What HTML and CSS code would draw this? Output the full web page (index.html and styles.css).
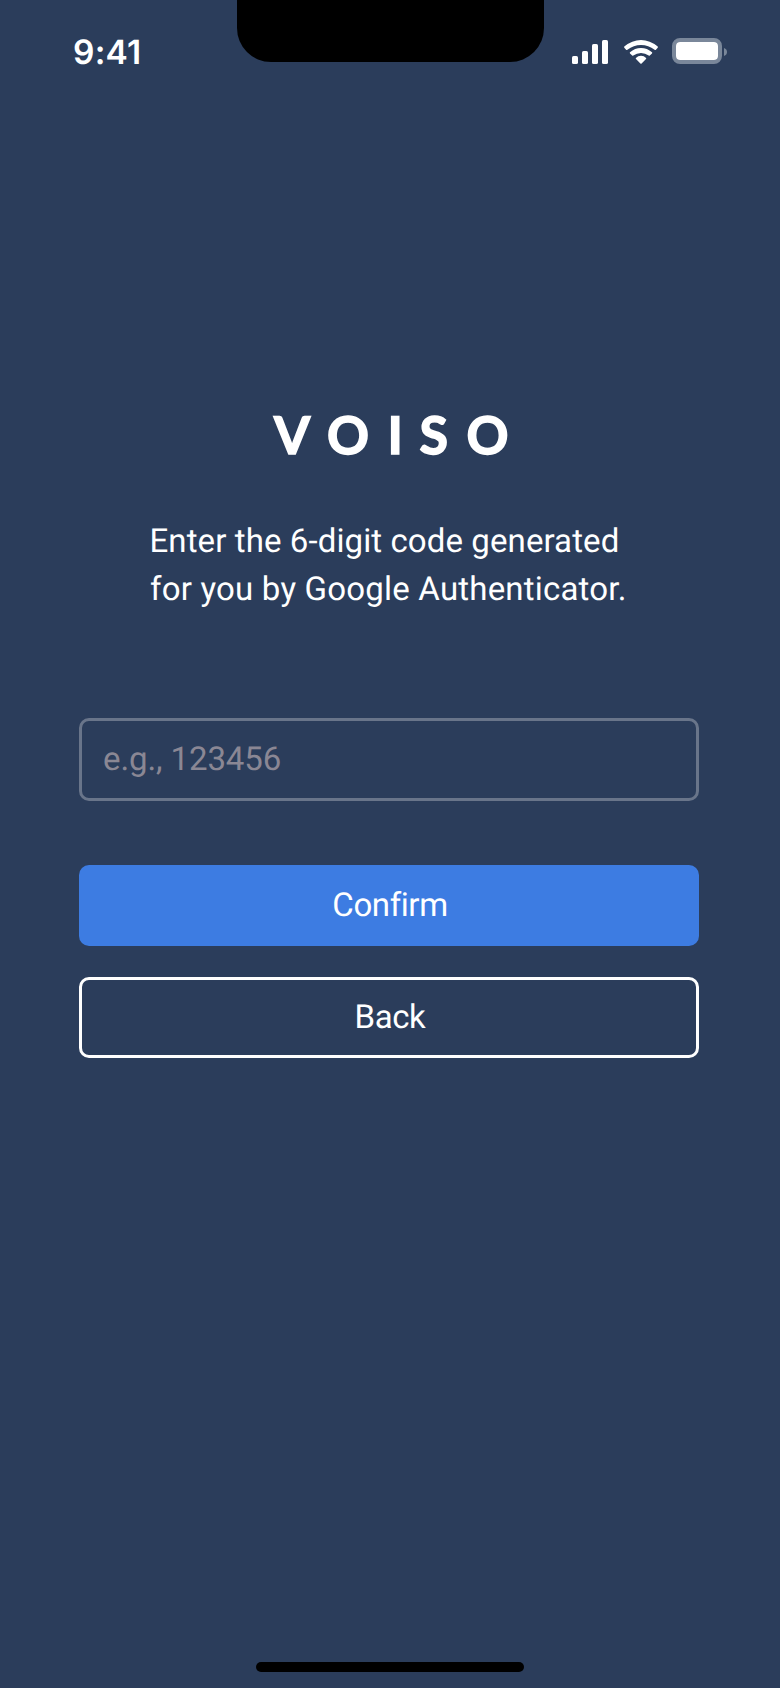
FILE: index.html
```html
<!DOCTYPE html>
<html lang="en">
<head>
<meta charset="utf-8">
<title>Voiso</title>
<link rel="stylesheet" href="styles.css">
</head>
<body>
<div class="screen">
  <header class="status">
    <span class="time">9:41</span>
    <div class="notch"></div>
    <svg class="indicators" width="156" height="28" viewBox="0 0 156 28" fill="#fff">
      <rect x="0" y="18" width="6" height="8" rx="1.6"/>
      <rect x="10" y="13" width="6" height="13" rx="1.6"/>
      <rect x="20" y="6" width="6" height="20" rx="1.6"/>
      <rect x="30" y="2" width="6" height="24" rx="1.6"/>
      <path d="M52.3 8.6Q60 2 69 2T85.700 8.600Q86.200 9.200 85.700 9.700L83.700 11.900Q83.200 12.300 82.600 11.800Q76.500 6.900 69 6.900T55.400 11.800Q54.800 12.300 54.300 11.900L52.300 9.700Q51.800 9.200 52.300 8.600Z"/>
      <path d="M58 14.300Q62.800 9.900 69 9.900T80 14.300Q80.500 14.900 80 15.400L77.800 17.600Q77.300 18.100 76.700 17.600Q73.300 14.900 69 14.900T61.300 17.600Q60.700 18.100 60.200 17.600L58 15.400Q57.500 14.900 58 14.300Z"/>
      <path d="M63.900 20Q66 17.800 69 17.800T74.100 20Q74.500 20.600 74 21.100L69.600 25.500Q69 26 68.400 25.500L64 21.100Q63.500 20.600 63.900 20Z"/>
      <rect x="102" y="2" width="46" height="22" rx="6" fill="none" stroke="#7a879a" stroke-width="4"/>
      <rect x="104" y="4" width="42" height="18" rx="4"/>
      <path d="M152 10Q155 11.200 155 14T152 18Z" fill="#7a879a"/>
    </svg>
  </header>
  <main class="content">
    <h1 class="logo"><span class="v">V</span><span class="o">O</span><span class="i">I</span><span class="s">S</span><span class="o">O</span></h1>
    <p class="intro"><span class="line first">Enter the 6-digit code generated</span><span class="line second">for you by Google Authenticator.</span></p>
    <form class="form">
      <div class="field"><span class="hint">e.g., 123456</span></div>
      <div class="button primary"><span>Confirm</span></div>
      <div class="button outline"><span>Back</span></div>
    </form>
  </main>
  <div class="home"></div>
</div>
</body>
</html>
```
FILE: styles.css
```css
* { box-sizing: border-box; }
body { margin: 0; background: #2b3d5b; }
.screen {
  width: 780px; height: 1688px; overflow: hidden;
  display: flex; flex-direction: column; align-items: center;
  background: #2b3d5b; color: #fff;
  font-family: Roboto, "Liberation Sans", sans-serif; font-size: 33px;
  text-rendering: geometricPrecision;
}
.status { width: 100%; height: 94px; display: grid; grid-template-columns: 236.500px 307px 1fr; }
.time {
  padding: 33px 0 0 73px;
  font: 600 33.500px/40px Inter, "Liberation Sans", sans-serif; letter-spacing: .2px;
}
.notch { height: 62px; background: #000; border-radius: 0 0 34px 34px; }
.indicators { margin: 38px 0 0 28.500px; }
.content { width: 620px; margin-right: 2px; padding-top: 310px; flex: 1; }
.logo {
  display: flex; margin: 0 0 0 195px; height: 62px;
  font: 700 52px/62px Lato, "Liberation Sans", sans-serif;
  -webkit-text-stroke: 1.500px #fff;
}
.logo .v { width: 53px; }
.logo .o { width: 60.500px; }
.logo .i { width: 32px; }
.logo .s { width: 47px; }
.intro { margin: 51.500px 0 0 70.500px; line-height: 48px; }
.line { display: block; white-space: nowrap; width: max-content; }
.first { letter-spacing: .1px; }
.second { letter-spacing: .2px; padding-left: .5px; }
.form { padding-top: 104.500px; }
.field {
  height: 83px; padding-left: 21px; display: flex; align-items: center;
  border: 3px solid #69758a; border-radius: 10px; color: #8a8794;
}
.hint { letter-spacing: -.1px; }
.button {
  height: 80.500px; display: flex; align-items: center; justify-content: center;
  border-radius: 10px; letter-spacing: -.4px;
}
.button span { margin-left: 2px; }
.primary { margin-top: 64px; background: #3d7ce2; }
.outline { margin-top: 31.500px; border: 3px solid #fff; }
.home { width: 268px; height: 10px; margin-bottom: 16px; border-radius: 5px; background: #000; }
```
